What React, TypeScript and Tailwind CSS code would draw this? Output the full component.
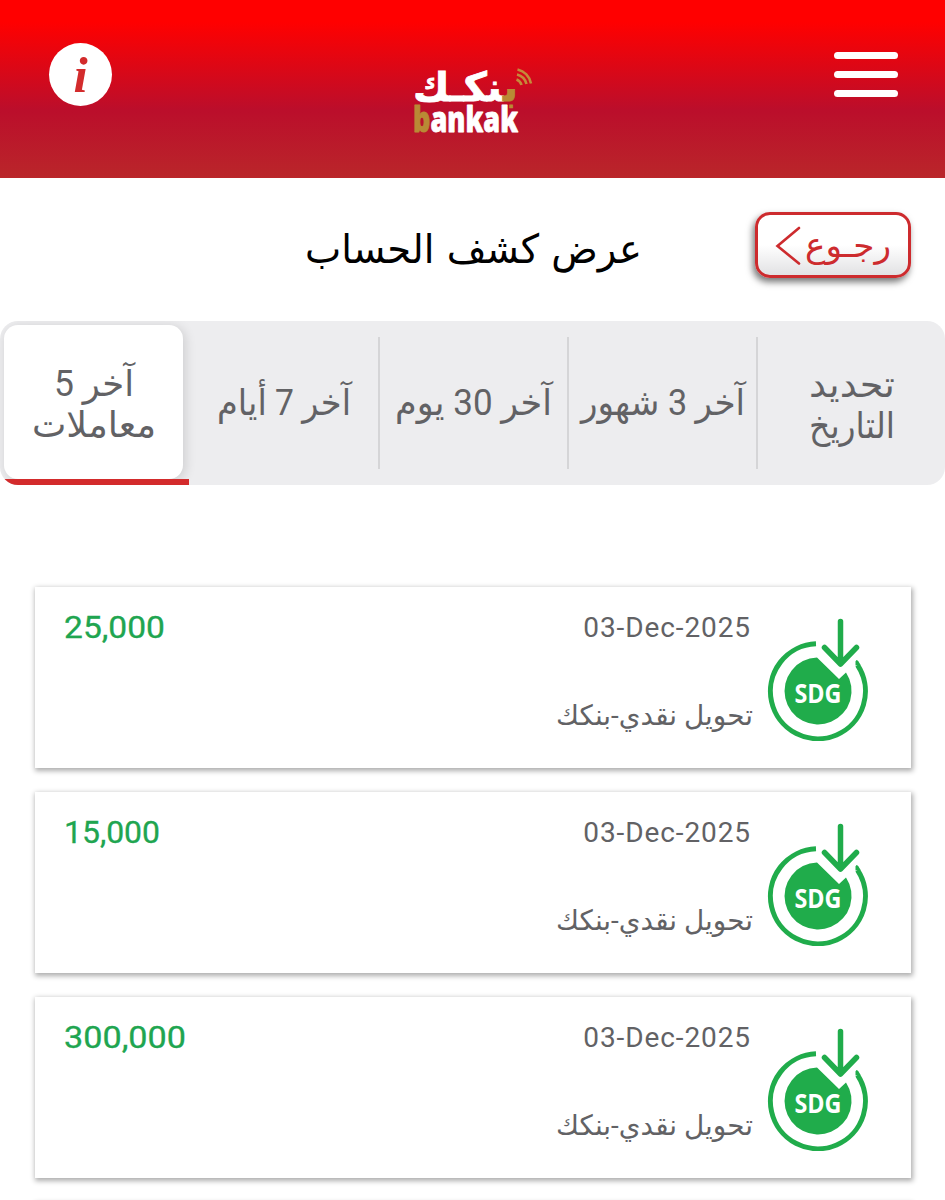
import clsx from 'clsx'

type Transaction = {
  id: number
  amount: string
  amountWidth: number
  date: string
  description: string
}

const transactions: Transaction[] = [
  { id: 1, amount: '25,000', amountWidth: 99, date: '03-Dec-2025', description: 'تحويل نقدي-بنكك' },
  { id: 2, amount: '15,000', amountWidth: 94, date: '03-Dec-2025', description: 'تحويل نقدي-بنكك' },
  { id: 3, amount: '300,000', amountWidth: 120, date: '03-Dec-2025', description: 'تحويل نقدي-بنكك' },
]

type Tab = { id: string; lines: Array<{ text: string; width: number }> }

const tabs: Tab[] = [
  { id: 'last5', lines: [{ text: 'آخر 5', width: 80 }, { text: 'معاملات', width: 124 }] },
  { id: 'week', lines: [{ text: 'آخر 7 أيام', width: 134 }] },
  { id: 'month', lines: [{ text: 'آخر 30 يوم', width: 157 }] },
  { id: 'quarter', lines: [{ text: 'آخر 3 شهور', width: 164 }] },
  { id: 'custom', lines: [{ text: 'تحديد', width: 86 }, { text: 'التاريخ', width: 86 }] },
]

const BankakLogo = () => (
  <svg width="124" height="72" viewBox="0 0 124 72" className="block overflow-visible" aria-label="بنكك bankak">
    <text
      x="105"
      y="33"
      direction="rtl"
      fontSize="40"
      fontWeight="700"
      textLength="105"
      lengthAdjust="spacingAndGlyphs"
      fill="#fff"
      stroke="#fff"
      strokeWidth="0.8"
      className="font-['DejaVu_Sans',sans-serif]"
    >
      <tspan fill="#b98a35" stroke="#b98a35">ب</tspan>نكـك
    </text>
    <text
      x="0"
      y="64"
      fontSize="35"
      fontWeight="800"
      textLength="105"
      lengthAdjust="spacingAndGlyphs"
      fill="#fff"
      stroke="#fff"
      strokeWidth="0.8"
      strokeLinejoin="round"
      className="font-['Open_Sans',sans-serif]"
    >
      <tspan fill="#b98a35" stroke="#b98a35">b</tspan>ankak
    </text>
    <g fill="none" stroke="#c58a3a" strokeWidth="2.6">
      <path d="M103.500 11.500a8 8 0 0 1 5 5.500" />
      <path d="M104 6.500a13 13 0 0 1 9.500 9.500" />
      <path d="M104.500 1.500a18 18 0 0 1 13.500 14" />
    </g>
  </svg>
)

const SdgIcon = () => (
  <svg width="104" height="124" viewBox="0 0 104 124" className="block">
    <path
      d="M50 26.800A47.500 47.500 0 1 0 91.500 48"
      fill="none"
      stroke="#20ac4b"
      strokeWidth="5"
    />
    <path d="M89.500 48.500V44.500Q90.500 41.500 92.500 44.500L94.500 48z" fill="#20ac4b" />
    <path d="M51 40.500A33.500 33.500 0 1 0 80 55.500L73 62z" fill="#20ac4b" />
    <path
      d="M74.500 4.500V47M58.500 30.500 74.500 47 90.500 30.500"
      fill="none"
      stroke="#20ac4b"
      strokeWidth="5.500"
      strokeLinecap="round"
      strokeLinejoin="round"
    />
    <text
      x="28.500"
      y="86"
      fontSize="26.500"
      fontWeight="700"
      textLength="47"
      lengthAdjust="spacingAndGlyphs"
      fill="#fff"
      className="font-['Open_Sans',sans-serif]"
    >
      SDG
    </text>
  </svg>
)

const Header = () => (
  <header className="h-[178px] shrink-0 bg-[linear-gradient(to_bottom,#ff0000_0px,#ff0000_22px,#bb0e2b_110px,#ba262a_178px)] flex items-start justify-between pl-[49px] pr-[47px]">
    <button
      type="button"
      aria-label="معلومات"
      className="mt-[43px] w-[63px] h-[63px] rounded-full bg-white flex items-center justify-center"
    >
      <span className="font-['Liberation_Serif',serif] italic font-bold text-[51px] leading-[54px] text-[#d32b2c]">
        i
      </span>
    </button>
    <div className="mt-[68px] ml-[3px]">
      <BankakLogo />
    </div>
    <button type="button" aria-label="القائمة" className="mt-[52px] w-[64px] flex flex-col gap-[12.5px]">
      <span className="h-[6.500px] rounded-full bg-white" />
      <span className="h-[6.500px] rounded-full bg-white" />
      <span className="h-[6.500px] rounded-full bg-white" />
    </button>
  </header>
)

const BackButton = () => (
  <button
    type="button"
    className="w-[156px] h-[66px] rounded-[15px] border-[3px] border-[#cd2b2e] bg-linear-to-b from-white from-50% to-[#e2e2e4] shadow-[-2px_4px_7px_0px_rgba(0,0,0,0.55)]"
  >
    <svg width="150" height="60" viewBox="0 0 150 60" className="block">
      <path
        d="M41 13 19.500 31 41 48.500"
        fill="none"
        stroke="#cd2b2e"
        strokeWidth="2.600"
        strokeLinecap="round"
      />
      <text
        x="133"
        y="42"
        direction="rtl"
        fontSize="34"
        textLength="86"
        lengthAdjust="spacingAndGlyphs"
        fill="#cd2b2e"
        className="font-['DejaVu_Sans',sans-serif]"
      >
        رجـوع
      </text>
    </svg>
  </button>
)

const PeriodTabs = ({ active }: { active: string }) => (
  <nav className="h-[164px] shrink-0 rounded-[18px] bg-[#ededef] overflow-hidden grid grid-cols-5">
    {tabs.map((tab, i) => {
      const isActive = tab.id === active
      return (
        <button
          key={tab.id}
          type="button"
          className={clsx('flex flex-col', isActive ? 'pt-1' : 'py-4')}
        >
          <span
            className={clsx(
              'flex flex-col items-center justify-center',
              isActive
                ? 'h-[154px] ml-1 mr-1.5 self-stretch rounded-[14px] bg-white shadow-[2px_2px_12px_rgba(0,0,0,0.14)]'
                : 'h-[132px] self-stretch',
              tab.lines.length > 1 && 'pt-1.5',
              i > 1 && 'border-l-2 border-[#d5d5d7]',
            )}
          >
            {tab.lines.map((line) => (
              <svg key={line.text} width={line.width} height="41" className="block overflow-visible">
                <text
                  x={line.width}
                  y="32"
                  direction="rtl"
                  fontSize="36"
                  textLength={line.width}
                  lengthAdjust="spacingAndGlyphs"
                  fill="#626265"
                  className="font-[Roboto,'DejaVu_Sans',sans-serif]"
                >
                  {line.text}
                </text>
              </svg>
            ))}
          </span>
          {isActive && <span className="h-1.5 ml-1 self-stretch bg-[#d32b2c]" />}
        </button>
      )
    })}
  </nav>
)

const TransactionCard = ({ amount, amountWidth, date, description }: Omit<Transaction, 'id'>) => (
  <article className="h-[181px] shrink-0 bg-white shadow-[1px_2px_5px_1px_rgba(0,0,0,0.32)] flex justify-between pl-[30px] pr-[41px]">
    <svg width={amountWidth} height="40" className="block mt-[20px] overflow-visible">
      <text
        x="-1"
        y="31"
        fontSize="31"
        textLength={amountWidth + 2}
        lengthAdjust="spacingAndGlyphs"
        fill="#20a550"
        stroke="#20a550"
        strokeWidth="0.3"
        className="font-[Roboto,sans-serif]"
      >
        {amount}
      </text>
    </svg>
    <div className="flex">
      <div className="flex flex-col items-end pt-[23px]">
        <p className="mr-[2px] font-[Roboto,sans-serif] text-[28px] leading-[36px] tracking-[0.9px] text-[#626265]">
          {date}
        </p>
        <svg width="197" height="40" className="block mt-[50px] overflow-visible">
          <text
            x="197"
            y="29"
            direction="rtl"
            fontSize="28"
            textLength="197"
            lengthAdjust="spacingAndGlyphs"
            fill="#626265"
            className="font-[Roboto,'DejaVu_Sans',sans-serif]"
          >
            {description}
          </text>
        </svg>
      </div>
      <div className="pt-[30px] ml-[13px]">
        <SdgIcon />
      </div>
    </div>
  </article>
)

export default function App() {
  return (
    <div className="w-[945px] h-[1200px] overflow-hidden bg-white flex flex-col">
      <Header />
      <section className="h-[143px] shrink-0 flex items-start justify-end pr-[34px]">
        <h1 className="mt-[42px] mr-[113px]">
          <svg width="337" height="60" className="block overflow-visible" aria-label="عرض كشف الحساب">
            <text
              x="337"
              y="43"
              direction="rtl"
              fontSize="40"
              textLength="337"
              lengthAdjust="spacingAndGlyphs"
              fill="#000"
              className="font-['DejaVu_Sans',sans-serif]"
            >
              عرض كشف الحساب
            </text>
          </svg>
        </h1>
        <div className="mt-[34px]">
          <BackButton />
        </div>
      </section>
      <PeriodTabs active="last5" />
      <main className="mt-[102px] pr-[34px] pl-[35px] flex flex-col gap-6">
        {transactions.map(({ id, ...rest }) => (
          <TransactionCard key={id} {...rest} />
        ))}
        <div className="h-[181px] shrink-0 bg-white shadow-[1px_2px_5px_1px_rgba(0,0,0,0.32)]" />
      </main>
    </div>
  )
}
